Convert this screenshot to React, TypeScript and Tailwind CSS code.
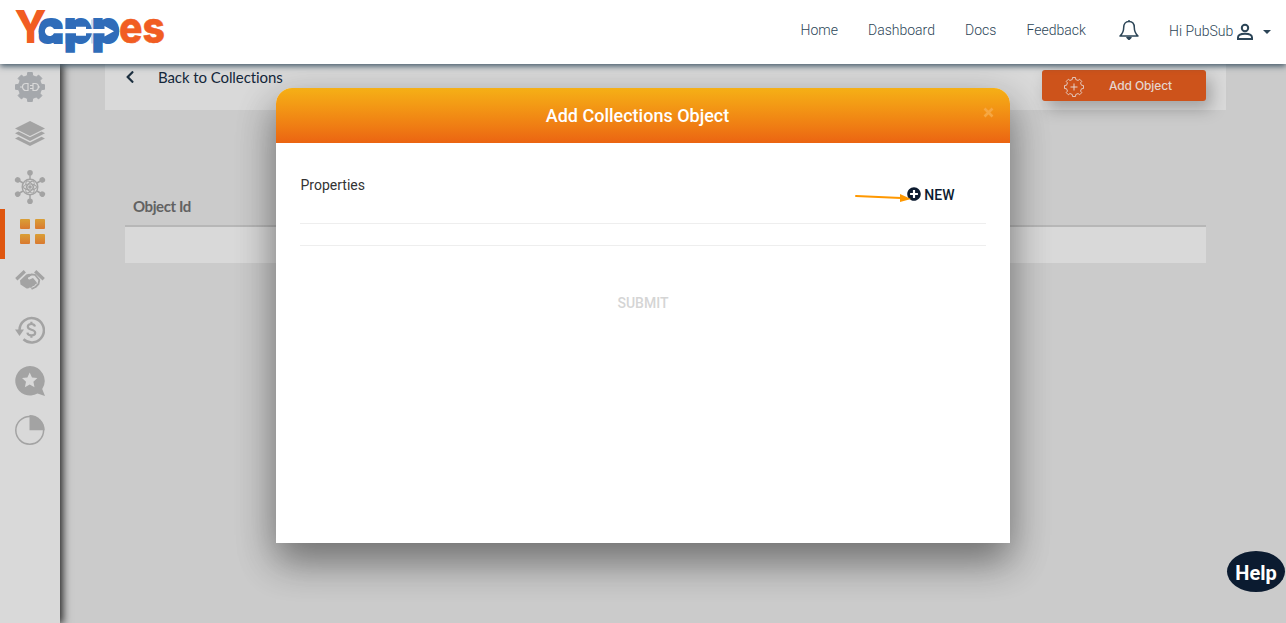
import React from "react";
import { FaPlusCircle, FaChevronLeft } from "react-icons/fa";

const gearPoints = (cx: number, cy: number, teeth: number, ro: number, ri: number) => {
  const pts: string[] = [];
  const step = (Math.PI * 2) / teeth;
  for (let i = 0; i < teeth; i++) {
    const c = i * step - Math.PI / 2;
    [[-0.29, ri], [-0.2, ro], [0.2, ro], [0.29, ri]].forEach(([o, r]) => {
      const a = c + o * step;
      pts.push(`${(cx + r * Math.cos(a)).toFixed(2)},${(cy + r * Math.sin(a)).toFixed(2)}`);
    });
  }
  return pts.join(" ");
};

const Logo = () => (
  <svg width="180" height="64" viewBox="0 0 180 64" className="block" aria-label="Yappes">
    <g fill="#2f6cb9">
      <circle cx="50.500" cy="31.200" r="12" />
      <circle cx="80" cy="31.200" r="12" />
      <circle cx="107" cy="31.200" r="12.200" />
    </g>
    <text y="43" fontFamily="Inter, sans-serif" fontWeight="800" fontSize="44">
      <tspan x="14.500" textLength="32" lengthAdjust="spacingAndGlyphs" fill="#f15d22" fontSize="45">Y</tspan>
      <tspan x="38.500" textLength="81" lengthAdjust="spacingAndGlyphs" fill="#2f6cb9" stroke="#2f6cb9" strokeWidth="2">app</tspan>
      <tspan x="119" textLength="46" lengthAdjust="spacingAndGlyphs" fill="#f15d22" stroke="#f15d22" strokeWidth="0.500">es</tspan>
    </text>
    <g stroke="#6fa0d8" strokeWidth="0.700">
      <path d="M65.500 19.500v24M92 19.500v24" />
    </g>
    <path d="M54 33.300a4.800 4.800 0 1 1 0-4.200H76V26.700h10v2.400h18.500V26l9.500 5.200-9.500 5.200v-3.100H86V35.700H76v-2.400z" fill="#fff" />
  </svg>
);

const GearPlug = () => (
  <svg width="30" height="30" viewBox="0 0 30 30" className="mt-2">
    <polygon points={gearPoints(15, 15, 8, 14.700, 11.700)} fill="#a5a8ac" stroke="#a5a8ac" strokeLinejoin="round" />
    <g fill="none" stroke="#d9d9d9" strokeWidth="1.2">
      <path d="M13 11.500h-2a3.500 3.500 0 0 0 0 7h2zM18 11.500h2a3.500 3.500 0 0 1 0 7h-2zM5 15h2.500M22.500 15H25M15 13.500h3M15 16.500h3" />
    </g>
  </svg>
);

const Layers = () => (
  <svg width="30" height="26" viewBox="0 0 30 26" className="mt-[19px]" fill="#a3a3a3">
    <path d="M15 0 30 7.500 15 15 0 7.500z" />
    <path d="M0 12.300l3.500-1.800L15 16.300l11.500-5.800 3.500 1.800-15 7.600z" />
    <path d="M0 17.500l3.500-1.800L15 21.500l11.500-5.800 3.500 1.800-15 7.600z" />
  </svg>
);

const Hub = () => (
  <svg width="32" height="34" viewBox="-16 -17 32 34" className="mt-[23px]" fill="none" stroke="#a3a3a3">
    {[0, 60, 120, 180, 240, 300].map((r) => (
      <g key={r} transform={`rotate(${r})`}>
        <path d="M0-8V-15" strokeWidth="1.500" />
        <circle cy="-14.200" r="2.800" fill="#a3a3a3" stroke="none" />
      </g>
    ))}
    <circle r="7.800" strokeWidth="1.400" />
    <g strokeWidth="1.100">
      <ellipse rx="6.500" ry="3" />
      <ellipse rx="6.500" ry="3" transform="rotate(60)" />
      <ellipse rx="6.500" ry="3" transform="rotate(120)" />
    </g>
    <circle r="1.800" fill="#a3a3a3" stroke="none" />
  </svg>
);

const Handshake = () => (
  <svg width="30" height="20" viewBox="0 0 30 20" className="mt-[11px]" fill="none" stroke="#a3a3a3">
    <path d="M1.300 9.200 9.800 1.200M28.700 9.200 20.200 1.200" strokeWidth="3.300" />
    <path d="M5 10.500 11.300 4.500 14 3.800l3.500.8-4.300 2.900c-.8 1.500.6 2.400 2 1.800l2.800-1.300 3.600 4.200c.8 1.300-.3 2.300-1.500 2-.1 1.500-1.200 2-2.400 1.700-.3 1.500-1.700 2.200-3 1.500-1 1.300-2.600 1.500-3.900.6L5.500 14.500z" fill="#a3a3a3" stroke="none" />
    <path d="M13.500 6.300 16.500 4.300 20 4.800l4.300 5.200-.8 4-3 3-4 2" strokeWidth="1.800" strokeLinejoin="round" />
  </svg>
);

const Refund = () => (
  <svg width="30" height="28" viewBox="0 0 30 28" className="mt-[26px]" fill="none" stroke="#a3a3a3">
    <path d="M4.500 14A12.200 12.200 0 1 1 8.500 23.300" strokeWidth="2.500" />
    <path d="M0 13.500h9L4.500 20z" fill="#a3a3a3" stroke="none" />
    <path d="M20 10.500c-.5-1.700-1.900-2.500-3.700-2.500-2 0-3.500 1-3.500 2.700 0 4 7.400 2 7.400 6 0 1.700-1.700 2.700-3.800 2.700s-3.700-1-4-2.800M16.400 5.800V8M16.400 19.400v2.400" strokeWidth="2.200" />
  </svg>
);

const StarBubble = () => (
  <svg width="30" height="30" viewBox="0 0 30 30" className="mt-[22px]">
    <path d="M14.800 0a14.800 14.800 0 0 1 12.400 22.900L30 30l-7.500-2.400A14.800 14.800 0 1 1 14.800 0z" fill="#a3a3a3" />
    <path d="M14.700 6.500l2.300 5 5.400.6-4 3.700 1.100 5.400-4.800-2.700-4.800 2.700L11 15.800l-4-3.700 5.400-.6z" fill="#d9d9d9" />
  </svg>
);

const Pie = () => (
  <svg width="30" height="30" viewBox="0 0 30 30" className="mt-[19px]">
    <circle cx="14.700" cy="15.300" r="13.900" fill="none" stroke="#a3a3a3" strokeWidth="1.500" />
    <path d="M14.500 0A15 15 0 0 1 29.700 15.300H14.500z" fill="#a3a3a3" />
  </svg>
);

const Sidebar = () => (
  <aside className="relative z-10 flex w-[60px] shrink-0 flex-col items-center bg-[#d9d9d9] shadow-[2px_0_8px_1px_rgba(0,0,0,0.8)]">
    <GearPlug />
    <Layers />
    <Hub />
    <div className="mt-[5px] flex h-[50px] w-full border-l-[5px] border-[#df560f] pt-[10px] pl-[15px]">
      <div className="grid h-[25px] w-[25px] grid-cols-2 gap-[5px]">
        {[0, 1, 2, 3].map((n) => (
          <span key={n} className="h-[10px] w-[10px] rounded-[1px] bg-linear-to-b from-[#d99f36] to-[#d97930]" />
        ))}
      </div>
    </div>
    <Handshake />
    <Refund />
    <StarBubble />
    <Pie />
  </aside>
);

const Header = () => (
  <header className="relative z-30 flex h-16 shrink-0 bg-white text-[14px] font-light text-[#2c4557] shadow-[0_2px_6px_rgba(44,69,87,0.9)]">
    <Logo />
    <nav className="ml-auto flex pt-[20px] leading-5">
      <a className="w-[67.500px]">Home</a>
      <a className="w-[97px]">Dashboard</a>
      <a className="w-[61.500px]">Docs</a>
      <a className="w-[92.500px]">Feedback</a>
      <svg width="20" height="20" viewBox="0 0 20 20" fill="none" stroke="#2c4557" strokeWidth="1.500" strokeLinejoin="round">
        <path d="M10 1.500c-3.500 0-5.300 2.500-5.300 6 0 4.500-1.500 6.500-3.700 8.500h18c-2.200-2-3.700-4-3.700-8.500 0-3.500-1.800-6-5.300-6zM10 0v2" />
        <path d="M8 17.500h4l-2 2z" fill="#2c4557" />
      </svg>
      <span className="ml-[30px] w-[67px] pt-px">Hi PubSub</span>
      <svg width="18" height="18" viewBox="0 0 18 18" className="mt-[3px]" fill="none" stroke="#2c4557" strokeWidth="2">
        <circle cx="9" cy="5" r="3.200" />
        <path d="M2 16v-1.500c0-2.500 3.500-3.700 7-3.700s7 1.200 7 3.700V16z" />
      </svg>
      <span className="mt-[10px] mr-[15px] ml-[9px] h-0 w-0 border-x-4 border-t-4 border-x-transparent border-t-[#2c4557]" />
    </nav>
  </header>
);

const Collections = () => (
  <main className="flex-1 pr-[60px] pl-[45px]">
    <div className="flex h-[46px] bg-[#d9d9d9]">
      <FaChevronLeft size={14} className="mt-[6px] ml-[18px] text-[#1d3040]" />
      <span className="mt-[3px] ml-[21px] font-[Lato] text-[15px] leading-5 tracking-[-0.080px] text-[#14273a]">Back to Collections</span>
      <button className="mt-[6px] mr-5 ml-auto flex h-[31px] w-[164px] items-center rounded-[3px] bg-[#cd531b] pl-[22px] text-[#e5d5ce] shadow-[5px_8px_16px_rgba(0,0,0,0.25)]">
        <svg width="20" height="20" viewBox="0 0 20 20" className="mt-[2px]" fill="none" stroke="currentColor">
          <polygon points={gearPoints(10, 10, 8, 9.600, 7.700)} strokeWidth="0.900" strokeLinejoin="round" />
          <path d="M10 6.500v7M6.500 10h7" />
        </svg>
        <span className="ml-[25px] font-[Inter] text-[12px] font-medium tracking-[-0.120px]">Add Object</span>
      </button>
    </div>
    <div className="mx-5 pt-[86px]">
      <div className="h-[29px] pl-2 font-[Lato] text-[15px] leading-5 font-bold tracking-[-0.400px] text-[#626262]">Object Id</div>
      <div className="h-[38px] border-t-2 border-[#b7b7b7] bg-[#d9d9d9]" />
    </div>
  </main>
);

const Modal = () => (
  <section className="absolute top-[88px] left-[276px] z-20 flex h-[455px] w-[734px] flex-col rounded-t-[16px] bg-white shadow-[0_19px_38px_rgba(0,0,0,0.3),0_15px_42px_rgba(0,0,0,0.22)]">
    <div className="relative flex h-[55px] items-center justify-center rounded-t-[16px] bg-linear-to-b from-[#f5b016] to-[#eb6412] pr-[11px] text-[18px] font-medium text-white">
      Add Collections Object
      <svg width="11" height="11" viewBox="0 0 11 11" className="absolute top-[19px] right-[16px]">
        <path d="M1.500 1.500l8 8M9.500 1.500l-8 8" stroke="#f6a742" strokeWidth="2.600" />
      </svg>
    </div>
    <div className="mx-6 flex h-[81px] justify-between border-b border-[#eee] text-[14px] leading-5">
      <span className="mt-8 ml-[0.500px] text-[#333]">Properties</span>
      <div className="mt-[42px] mr-[31.500px] flex font-medium text-[#0c1b30]">
        <svg width="56" height="14" viewBox="0 0 56 14" className="relative z-10 mt-[4px] -mr-[4px]">
          <path d="M1 7l45 2" stroke="#ff9800" strokeWidth="2" strokeLinecap="round" />
          <path d="M45 5l11 5-11 3z" fill="#ff9800" />
        </svg>
        <FaPlusCircle size={14} className="mt-[2px]" />
        <span className="ml-[3.500px]">NEW</span>
      </div>
    </div>
    <div className="mx-6 h-[22px] border-b border-[#eee]" />
    <button className="mt-[47px] text-center text-[14px] leading-5 font-medium text-[#d5d5d5]">SUBMIT</button>
  </section>
);

export default function App() {
  return (
    <div className="relative flex h-[623px] w-[1286px] flex-col overflow-hidden bg-[#cbcbcb] font-[Roboto]">
      <Header />
      <div className="flex flex-1">
        <Sidebar />
        <Collections />
      </div>
      <Modal />
      <button className="absolute top-[551px] left-[1227px] z-40 h-[41px] w-[58px] rounded-[50%] bg-[#0b1b30] pt-[3px] text-[20px] leading-5 font-bold text-white">Help</button>
    </div>
  );
}
